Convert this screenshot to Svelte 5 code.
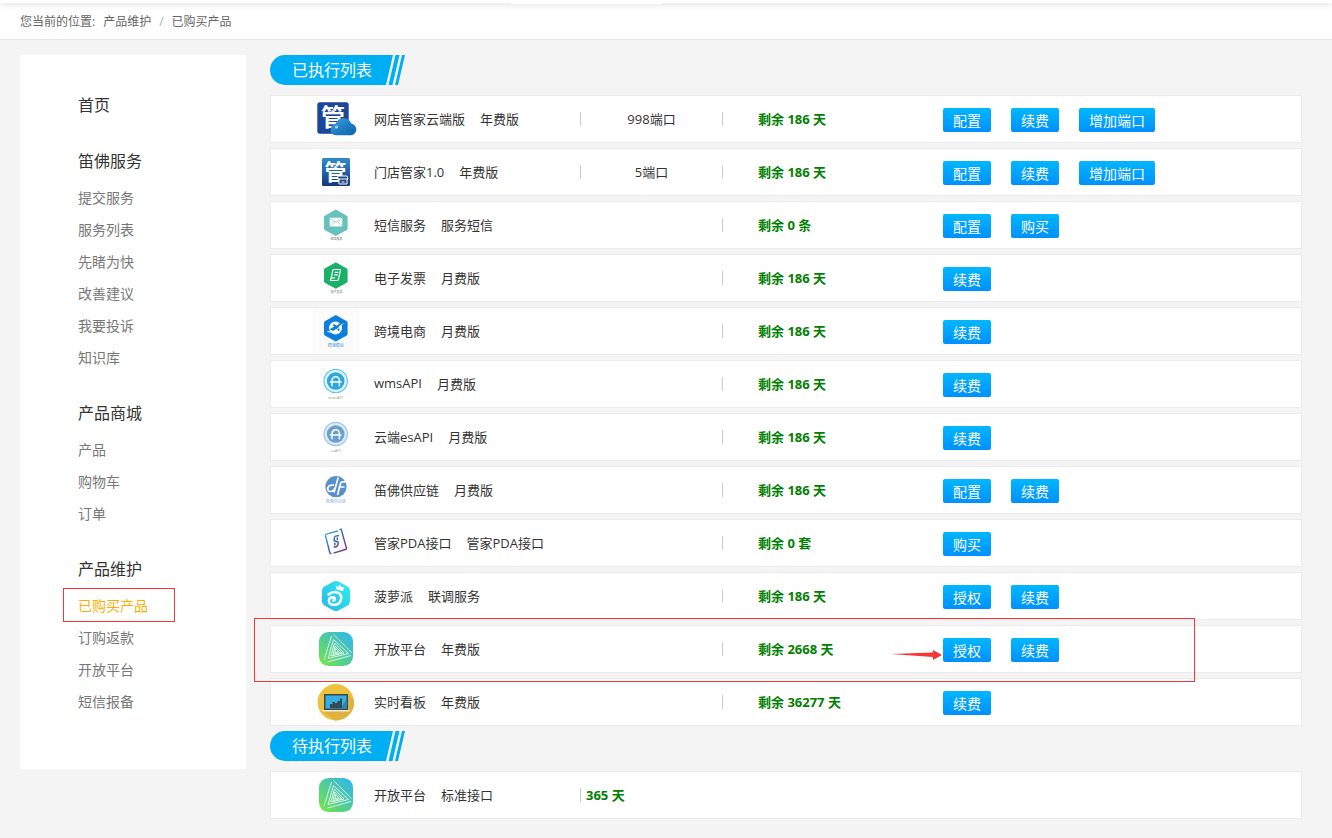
<script lang="ts">
  type Row = {
    icon: string;
    name: string;
    edition: string;
    port?: string;
    remain?: string;
    total?: string;
    actions: string[];
    marked?: boolean;
  };

  const menu = [
    {
      title: '笛佛服务',
      items: ['提交服务', '服务列表', '先睹为快', '改善建议', '我要投诉', '知识库'],
    },
    { title: '产品商城', items: ['产品', '购物车', '订单'] },
    { title: '产品维护', items: ['已购买产品', '订购返款', '开放平台', '短信报备'] },
  ];

  const running: Row[] = [
    { icon: 'cloud', name: '网店管家云端版', edition: '年费版', port: '998端口', remain: '剩余 186 天', actions: ['配置', '续费', '增加端口'] },
    { icon: 'store', name: '门店管家1.0', edition: '年费版', port: '5端口', remain: '剩余 186 天', actions: ['配置', '续费', '增加端口'] },
    { icon: 'sms', name: '短信服务', edition: '服务短信', remain: '剩余 0 条', actions: ['配置', '购买'] },
    { icon: 'invoice', name: '电子发票', edition: '月费版', remain: '剩余 186 天', actions: ['续费'] },
    { icon: 'border', name: '跨境电商', edition: '月费版', remain: '剩余 186 天', actions: ['续费'] },
    { icon: 'wms', name: 'wmsAPI', edition: '月费版', remain: '剩余 186 天', actions: ['续费'] },
    { icon: 'es', name: '云端esAPI', edition: '月费版', remain: '剩余 186 天', actions: ['续费'] },
    { icon: 'chain', name: '笛佛供应链', edition: '月费版', remain: '剩余 186 天', actions: ['配置', '续费'] },
    { icon: 'pda', name: '管家PDA接口', edition: '管家PDA接口', remain: '剩余 0 套', actions: ['购买'] },
    { icon: 'pineapple', name: '菠萝派', edition: '联调服务', remain: '剩余 186 天', actions: ['授权', '续费'] },
    { icon: 'open', name: '开放平台', edition: '年费版', remain: '剩余 2668 天', actions: ['授权', '续费'], marked: true },
    { icon: 'board', name: '实时看板', edition: '年费版', remain: '剩余 36277 天', actions: ['续费'] },
  ];

  const waiting: Row[] = [
    { icon: 'open', name: '开放平台', edition: '标准接口', total: '365 天', actions: [] },
  ];

  let active = $state('已购买产品');
</script>

{#snippet apiBadge(ring: string, halo: string, fill: string, caption: string)}
  <circle cx="22.7" cy="20" r="11.7" fill={halo} stroke={ring} stroke-width="1.2" />
  <circle cx="22.7" cy="20" r="8.8" fill={fill} />
  <path d="M19 25.200v-5.700a3.700 3.700 0 0 1 7.400 0v5.700M16.800 21h11.800" fill="none" stroke="#fff" stroke-width="1.500" />
  <text x="22.700" y="37.500" class="cap" fill="#999">{caption}</text>
{/snippet}

{#snippet icon(kind: string)}
  <svg class="icon" viewBox="0 0 46 46" aria-hidden="true">
    {#if kind === 'cloud'}
      <defs>
        <linearGradient id="cloud-fill" x1="0" y1="0" x2="1" y2="1">
          <stop offset="0" stop-color="#4fa3dc" />
          <stop offset=".5" stop-color="#1f7fc4" />
          <stop offset="1" stop-color="#1163a8" />
        </linearGradient>
      </defs>
      <rect x="4.300" y="6.300" width="31.400" height="31.400" rx="2.500" fill="#1c469c" />
      <text x="20" y="29.500" class="glyph" font-size="24">管</text>
      <path d="M23 39.300a5.700 5.700 0 0 1-.6-11.300a8.500 8.500 0 0 1 15.800-.6a6 6 0 0 1-.4 11.900z" fill="url(#cloud-fill)" />
      <circle cx="23.500" cy="31" r="1.600" fill="#b9e2fa" opacity=".8" />
    {:else if kind === 'store'}
      <defs>
        <linearGradient id="store-fill" x1="0" y1="0" x2="0" y2="1">
          <stop offset="0" stop-color="#2e8dce" />
          <stop offset="1" stop-color="#17367c" />
        </linearGradient>
      </defs>
      <rect x="9" y="9" width="28" height="28" rx="1.500" fill="url(#store-fill)" />
      <text x="22.500" y="31" class="glyph" font-size="22">管</text>
      <path d="M25 27h9l1 3h-1v5h-8v-5h-1.500z" fill="#1c4488" stroke="#fff" stroke-width="1" />
      <path d="M25 30h9.500M28.500 33h3" stroke="#fff" stroke-width="1" />
    {:else if kind === 'sms'}
      <path d="M22.800 7.500l11 6.200q.8.500.8 1.400v11.400q0 .9-.8 1.400l-11 6.100l-11-6.100q-.8-.5-.8-1.400V15.100q0-.9.8-1.400z" fill="#66c2bc" />
      <rect x="16.700" y="15.700" width="12.600" height="8.800" rx="1" fill="#fff" />
      <path d="M18.500 17.500l4.500 3l4.500-3M18.500 22.800l2.300-2.300M27.500 22.800l-2.300-2.300" fill="none" stroke="#66c2bc" stroke-width=".8" />
      <text x="23.500" y="37.800" class="cap small" fill="#777">短信服务</text>
    {:else if kind === 'invoice'}
      <path d="M22.800 7.300l11 6.200q.8.500.8 1.400v11.400q0 .9-.8 1.400l-11 6.100l-11-6.100q-.8-.5-.8-1.400V14.900q0-.9.8-1.400z" fill="#19b067" />
      <path d="M20 14.500h7.500l-2 9.800q-.4 1.200-1.500 1.200h-6.500l.6-2.600h4M20 14.500l-1.700 8.400M21.800 17.300h3.500M21.300 19.800h3.500" fill="none" stroke="#fff" stroke-width="1.200" />
      <text x="23.500" y="38" class="cap small" fill="#777">电子发票</text>
    {:else if kind === 'border'}
      <rect width="46" height="46" fill="#fbfbfb" />
      <path d="M22.800 7l11 6.200q.8.500.8 1.400V26q0 .9-.8 1.400l-11 6.100l-11-6.100q-.8-.5-.8-1.400V14.600q0-.9.8-1.400z" fill="#0c7fdc" />
      <circle cx="22.500" cy="20" r="6.500" fill="#fff" />
      <path d="M16.500 21.500l4.500-3l-1.500-2l1.800-.3l2.500 1.500l4-3.200l1.200.5l-3.300 4l1 3.300l-1.200.8l-2.200-2.300l-3 2.200z" fill="#0c7fdc" />
      <path d="M14.500 23.500q6 3 15.500-8" fill="none" stroke="#fff" stroke-width="1" />
      <text x="22.800" y="39" class="cap" fill="#3a94e0">跨境模块</text>
    {:else if kind === 'wms'}
      {@render apiBadge('#6cc6ee', '#e2f4fb', '#2ba8e2', 'wmsAPI')}
    {:else if kind === 'es'}
      {@render apiBadge('#a5c4e2', '#d8edf4', '#6b9fd2', 'esAPI')}
    {:else if kind === 'chain'}
      <circle cx="23" cy="19.700" r="10.600" fill="#5a8fcf" />
      <path d="M25.200 10.500l-4.200 15M21 18.200q-5.500-.8-6.300 3q-.4 3.300 3 3.300q3 0 4-3M24.500 28l3-11.500q.5-1.700 2.300-1.700h2.500M25.500 20h6" fill="none" stroke="#fff" stroke-width="1.700" />
      <text x="22.800" y="35.500" class="cap" fill="#8eaedb">笛佛供应链</text>
    {:else if kind === 'pda'}
      <defs>
        <linearGradient id="pda-line" gradientUnits="userSpaceOnUse" x1="12" y1="12" x2="34" y2="32">
          <stop offset="0" stop-color="#36b4e4" />
          <stop offset=".5" stop-color="#3c5f9f" />
          <stop offset="1" stop-color="#7a2a9a" />
        </linearGradient>
      </defs>
      <g fill="none" stroke="url(#pda-line)">
        <path d="M25 10.800l-11.500 3.400q-1.300.4-1 1.700l4.300 16.600q.4 1.300 1.700 1M26.500 9.500l1.700-.3l5.200 18.600q.3 1.300-1 1.700l-11.900 3.600" stroke-width="1.400" />
        <path d="M26 15.800q-4.500-.6-4.800 2.700v2.200l3.800 1.300v2.500q-.8 3-4.400 2.500M24.300 17.500v2.500M21.800 22.800v2.500" stroke-width="1.500" />
      </g>
    {:else if kind === 'pineapple'}
      <defs>
        <linearGradient id="pine-fill" x1="1" y1="0" x2="0" y2="1">
          <stop offset="0" stop-color="#2ff0ef" />
          <stop offset="1" stop-color="#25b7e8" />
        </linearGradient>
      </defs>
      <path d="M20.500 8.600q2.500-1.300 5 0l9 5q2.500 1.400 2.500 4v10.800q0 2.600-2.500 4l-9 5q-2.500 1.300-5 0l-9-5Q9 31 9 28.400V17.600q0-2.600 2.500-4z" fill="url(#pine-fill)" />
      <path d="M15.500 21.500q3.500-3 8-2.300q5 1 4.800 6q-.7 6.500-7 6.800q-5.500-.3-5.400-4.300q.3-3.400 3.800-3.400q2.500.2 2.200 2.200q-.3 1-1.500 1" fill="none" stroke="#fff" stroke-width="2.400" stroke-linecap="round" />
      <path d="M23.500 16.500l-.8-4l2.700 1.500l1.400-2.500l1.800 2.800l2.600-.6l-1.200 4.500z" fill="#fff" />
    {:else if kind === 'open'}
      <defs>
        <linearGradient id="open-fill" x1="1" y1="0" x2="0" y2="1">
          <stop offset="0" stop-color="#2bb6f5" />
          <stop offset=".5" stop-color="#4fcb9c" />
          <stop offset="1" stop-color="#74e840" />
        </linearGradient>
      </defs>
      <rect x="6" y="6" width="34" height="34" rx="9.500" fill="url(#open-fill)" />
      <g fill="none" stroke="#fff" stroke-width="1" opacity=".8">
        <path d="M20.500 8.500l18 18M38 29.500L14.500 36M11 34l7.500-24" />
        <path d="M20.500 13.500l15 14L15 32.500zM21.500 17l9.500 10L17.800 30zM22 20l6.500 6.500L20 28.500zM22.700 22.500l3 3.300l-4 1z" />
      </g>
    {:else if kind === 'board'}
      <circle cx="22.800" cy="23.300" r="18.200" fill="#ecc13e" />
      <path d="M35 15.500l5.700 5.500q1.500 10-5.700 15.800q-5.500 4.700-13 4.700L9 32z" fill="#dfb13d" />
      <rect x="11" y="15" width="24" height="16" fill="#3c4650" />
      <rect x="12.500" y="16.500" width="21" height="13" fill="#35aee0" />
      <path d="M33.500 21v8.500H27z" fill="#2589b8" />
      <path d="M17 29v-4h2.500v-2H22v1h2.500v-2H27v-2.500h2V29z" fill="#35434f" />
      <path d="M19.500 25v4M22 24v5M24.500 23v6M27 22v7" stroke="#35708e" stroke-width=".5" />
      <path d="M8.500 31h29l-1.500 1.500H10z" fill="#f3ead2" />
    {/if}
  </svg>
{/snippet}

{#snippet heading(text: string)}
  <h2 class="ribbon">
    <svg viewBox="0 0 135 30" aria-hidden="true">
      <path d="M15 0h108l-7 30H15a15 15 0 0 1 0-30zM125.500 0h4l-7 30h-4zM132 0h3l-7 30h-3z" fill="#00aff3" />
    </svg>
    <span>{text}</span>
  </h2>
{/snippet}

{#snippet list(rows: Row[])}
  <ul class="rows">
    {#each rows as row}
      <li class="row">
        {@render icon(row.icon)}
        <div class="name">
          <span>{row.name}</span>
          <span>{row.edition}</span>
        </div>
        <div class="port" class:cell={row.port || row.total}>
          {#if row.port}
            <span class="count">{row.port}</span>
          {:else if row.total}
            <strong class="total">{row.total}</strong>
          {/if}
        </div>
        <div class="remain" class:cell={row.remain}>
          {#if row.remain}<strong>{row.remain}</strong>{/if}
        </div>
        <div class="actions">
          {#each row.actions as action}
            <button type="button">{action}</button>
          {/each}
          {#if row.marked}
            <svg class="arrow" viewBox="0 0 52 12" aria-hidden="true">
              <path d="M0 5l42-1.500V1l9 5l-9 5V8z" fill="#f93434" />
            </svg>
          {/if}
        </div>
        {#if row.marked}<span class="mark"></span>{/if}
      </li>
    {/each}
  </ul>
{/snippet}

<div class="topbar"><span class="tab"></span></div>

<nav class="crumbs">
  <span>您当前的位置:</span>
  <a href="#maintain">产品维护</a>
  <span class="slash">/</span>
  <a href="#bought">已购买产品</a>
</nav>

<div class="layout">
  <aside class="side">
    <a class="home" href="#home">首页</a>
    {#each menu as group}
      <section>
        <h3>{group.title}</h3>
        <ul>
          {#each group.items as item}
            <li class:active={item === active}>
              <a href="#{item}" onclick={() => (active = item)}>{item}</a>
            </li>
          {/each}
        </ul>
      </section>
    {/each}
  </aside>

  <main>
    {@render heading('已执行列表')}
    {@render list(running)}
    {@render heading('待执行列表')}
    {@render list(waiting)}
  </main>
</div>

<style>
  :global(body) {
    background: #f4f4f4;
    color: #333;
    font-family: 'Open Sans', 'Noto Sans CJK SC', sans-serif;
    font-size: 13px;
  }
  a {
    color: inherit;
    text-decoration: none;
  }
  ul,
  h2,
  h3 {
    margin: 0;
    padding: 0;
    list-style: none;
    font-weight: 400;
  }

  .topbar {
    position: relative;
    height: 3px;
    background: #fff;
    box-shadow: 0 1px 6px rgba(0, 0, 0, 0.2);
  }
  .tab {
    position: absolute;
    top: 0;
    left: 511px;
    width: 150px;
    height: 4px;
    background: #fff;
  }
  .crumbs {
    display: flex;
    gap: 8px;
    padding: 2px 0 0 20px;
    line-height: 34px;
    font-size: 12px;
    color: #666;
    background: #fff;
    border-bottom: 1px solid #e5e5e5;
  }
  .crumbs .slash {
    color: #aaa;
  }

  .layout {
    display: flex;
    align-items: flex-start;
    gap: 24px;
    padding: 15px 30px 19px 20px;
  }

  .side {
    flex: 0 0 226px;
    box-sizing: border-box;
    padding: 38px 0 51px 58px;
    background: #fff;
  }
  .home,
  .side h3 {
    display: block;
    font-size: 16px;
    line-height: 24px;
  }
  .home {
    margin-bottom: 32px;
  }
  .side section + section {
    margin-top: 27px;
  }
  .side h3 {
    margin-bottom: 9px;
  }
  .side li {
    position: relative;
    font-size: 14px;
    line-height: 32px;
    color: #777;
  }
  .side li.active {
    color: #ffae00;
  }
  .side li.active::after {
    content: '';
    position: absolute;
    top: -2px;
    left: -15px;
    box-sizing: border-box;
    width: 112px;
    height: 34px;
    border: 1px solid #f93434;
    pointer-events: none;
  }

  main {
    flex: 1;
    min-width: 0;
  }
  .ribbon {
    position: relative;
    width: 135px;
    height: 30px;
    margin-bottom: 10px;
    line-height: 30px;
    font-size: 16px;
    color: #fff;
  }
  .ribbon svg {
    position: absolute;
    width: 135px;
    height: 30px;
  }
  .ribbon span {
    position: relative;
    padding-left: 22px;
  }

  .row {
    position: relative;
    display: grid;
    grid-template-columns: 46px 221px 142px 221px 1fr;
    align-items: center;
    height: 46px;
    margin-bottom: 5px;
    padding-left: 42px;
    background: #fff;
    border: 1px solid #ebebeb;
  }
  .icon {
    width: 46px;
    height: 46px;
  }
  .icon .cap {
    font-size: 4px;
    text-anchor: middle;
  }
  .icon .small {
    font-size: 3px;
  }
  .icon .glyph {
    fill: #fff;
    font-weight: 700;
    text-anchor: middle;
  }
  .name {
    display: flex;
    gap: 15px;
    padding-left: 15px;
  }
  .name,
  .count,
  strong {
    padding-bottom: 2px;
  }
  .cell {
    display: flex;
    align-items: center;
  }
  .cell::before {
    content: '';
    width: 1px;
    height: 14px;
    background: #ccc;
  }
  .count {
    flex: 1;
    text-align: center;
  }
  strong {
    color: #008000;
    font-weight: 700;
  }
  .total {
    padding-left: 5px;
  }
  .remain strong {
    padding-left: 35px;
  }
  .actions {
    position: relative;
    display: flex;
    gap: 20px;
    padding-top: 2px;
  }
  button {
    height: 24px;
    padding: 2px 10px 0;
    border: 0;
    border-radius: 2px;
    background: linear-gradient(#00b7ff, #0090ff);
    color: #fff;
    font-family: inherit;
    font-size: 14px;
    line-height: 22px;
    cursor: pointer;
  }
  .arrow {
    position: absolute;
    top: 13px;
    left: -52px;
    width: 52px;
    height: 12px;
  }
  .mark {
    position: absolute;
    top: -8px;
    left: -17px;
    z-index: 1;
    box-sizing: border-box;
    width: 941px;
    height: 64px;
    border: 1px solid #f93434;
    pointer-events: none;
  }
</style>
